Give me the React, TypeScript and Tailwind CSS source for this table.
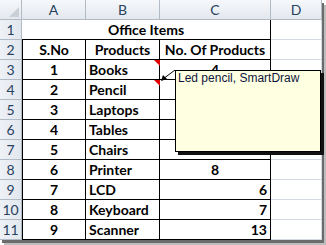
import React from 'react';

type Row = { no: number; product: string; count: number | null; align: 'center' | 'right' };

// counts under the open comment box are left out; the note covers them
const rows: Row[] = [
  { no: 1, product: 'Books', count: 4, align: 'center' },
  { no: 2, product: 'Pencil', count: null, align: 'center' },
  { no: 3, product: 'Laptops', count: null, align: 'center' },
  { no: 4, product: 'Tables', count: null, align: 'center' },
  { no: 5, product: 'Chairs', count: 7, align: 'center' },
  { no: 6, product: 'Printer', count: 8, align: 'center' },
  { no: 7, product: 'LCD', count: 6, align: 'right' },
  { no: 8, product: 'Keyboard', count: 7, align: 'right' },
  { no: 9, product: 'Scanner', count: 13, align: 'right' },
];

const headCell =
  'h-5 flex items-center justify-center bg-gradient-to-b from-[#f6f8fb] to-[#e3e8ee] border-r border-b border-[#b1bbc6] text-[#27415f] text-[14px]';
const rowHead =
  'h-5 flex items-center justify-center bg-gradient-to-r from-[#eef1f6] to-[#e2e7ee] border-r border-b border-[#b1bbc6] text-[#27415f] text-[14px]';
const grid = 'h-5 border-r border-b border-[#d4dae3]';
const boxed = 'h-5 border-r border-b border-black flex items-center text-[14px] font-bold text-black';

function CommentNote() {
  return (
    <div className="absolute left-[160px] top-[58px] w-[162px] h-[96px] pointer-events-none">
      {/* red comment markers */}
      <div className="absolute left-[-6px] top-[2px] w-0 h-0 border-l-[6px] border-l-transparent border-t-[6px] border-t-[#e00000]" />
      <div className="absolute left-[-6px] top-[22px] w-0 h-0 border-l-[6px] border-l-transparent border-t-[6px] border-t-[#e00000]" />
      <svg className="absolute left-0 top-0" width="20" height="30" viewBox="0 0 20 30">
        <line x1="15" y1="12" x2="3" y2="21" stroke="black" strokeWidth="1" />
        <polygon points="1,23 3,17 7,21" fill="black" />
      </svg>
      <div className="absolute left-[15px] top-[12px] w-[146px] h-[82px] bg-[#ffffe1] border border-black shadow-[3px_3px_0_0_#111] px-[2px] text-[12px] leading-[15px] text-[#0d1640] font-['Liberation_Sans',Arial,sans-serif]">
        Led pencil, SmartDraw
      </div>
    </div>
  );
}

export default function App() {
  return (
    <div className="w-[326px] h-[245px] bg-white font-['Lato','Open_Sans',sans-serif]">
      <div className="relative w-[322px] h-[240px] bg-white shadow-[2px_3px_0_0_#6b6b6b,4px_5px_0_0_#bdbdbd]">
        <div className="grid grid-cols-[22px_64px_74px_111px_51px]">
          {/* column headers */}
          <div className={headCell}>
            <div className="ml-auto mr-[2px] mt-auto mb-[2px] w-0 h-0 border-l-[10px] border-l-transparent border-b-[10px] border-b-[#c9cfd7]" />
          </div>
          <div className={headCell}>A</div>
          <div className={headCell}>B</div>
          <div className={headCell}>C</div>
          <div className={headCell}>D</div>

          {/* row 1 */}
          <div className={rowHead}>1</div>
          <div className={`${boxed} col-span-3 justify-center`}>Office Items</div>
          <div className={grid} />

          {/* row 2 */}
          <div className={rowHead}>2</div>
          <div className={`${boxed} border-l justify-center`}>S.No</div>
          <div className={`${boxed} justify-center`}>Products</div>
          <div className={`${boxed} justify-center`}>No. Of Products</div>
          <div className={grid} />

          {rows.map((r, i) => (
            <React.Fragment key={r.no}>
              <div className={rowHead}>{i + 3}</div>
              <div className={`${boxed} border-l justify-center`}>{r.no}</div>
              <div className={`${boxed} pl-[3px]`}>{r.product}</div>
              <div className={`${boxed} ${r.align === 'center' ? 'justify-center' : 'justify-end pr-[3px]'}`}>
                {r.count}
              </div>
              <div className={grid} />
            </React.Fragment>
          ))}
        </div>
        <CommentNote />
      </div>
    </div>
  );
}
